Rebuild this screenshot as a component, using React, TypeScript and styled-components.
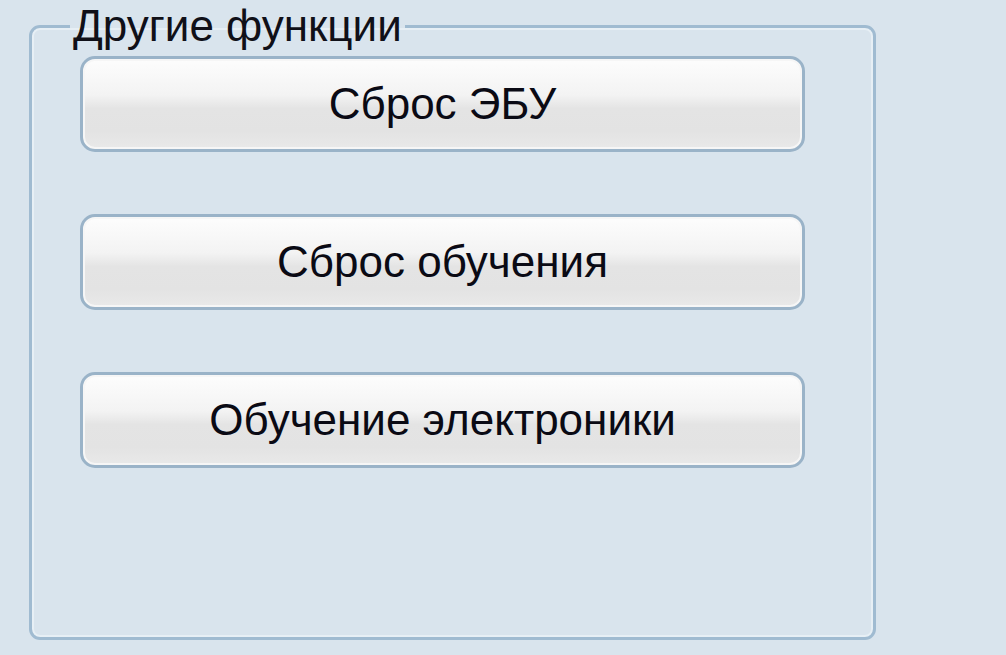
import styled, { createGlobalStyle } from "styled-components";

const Global = createGlobalStyle`
  html, body {
    margin: 0;
    padding: 0;
    background: #d9e4ed;
  }
  body {
    width: 1006px;
    height: 655px;
    overflow: hidden;
    font-family: "Liberation Sans", "DejaVu Sans", sans-serif;
  }
`;

const Page = styled.main`
  padding: 2px 0 0 29px;
  box-sizing: border-box;
  width: 1006px;
  height: 655px;
`;

const Group = styled.fieldset`
  box-sizing: border-box;
  width: 847px;
  height: 638px;
  margin: 0;
  padding: 0;
  border: 3px solid #a0bbd1;
  border-radius: 11px;
  box-shadow: inset 0 0 0 2px #e7eff5;
`;

const Legend = styled.legend`
  margin-left: 38px;
  padding: 0 3px;
  font-size: 44px;
  line-height: 48px;
  color: #101018;
`;

// column of push buttons inside the group
const Stack = styled.div`
  display: flex;
  flex-direction: column;
  gap: 62px;
  padding: 6px 0 0 48px;
`;

const Btn = styled.button`
  box-sizing: border-box;
  width: 725px;
  height: 96px;
  border: 3px solid #9ab3c8;
  border-radius: 15px;
  background: linear-gradient(
    to bottom,
    #fdfdfd 0%,
    #f3f3f3 40%,
    #e4e4e4 55%,
    #e3e3e3 80%,
    #e9e9e9 100%
  );
  box-shadow: inset 0 0 0 2px #f6f6f6;
  font-family: inherit;
  font-size: 44px;
  color: #0a0a14;
  padding: 0;
  cursor: pointer;
`;

const actions = ["Сброс ЭБУ", "Сброс обучения", "Обучение электроники"];

export default function App() {
  return (
    <Page>
      <Global />
      <Group>
        <Legend>Другие функции</Legend>
        <Stack>
          {actions.map((label) => (
            <Btn key={label} type="button">
              {label}
            </Btn>
          ))}
        </Stack>
      </Group>
    </Page>
  );
}
